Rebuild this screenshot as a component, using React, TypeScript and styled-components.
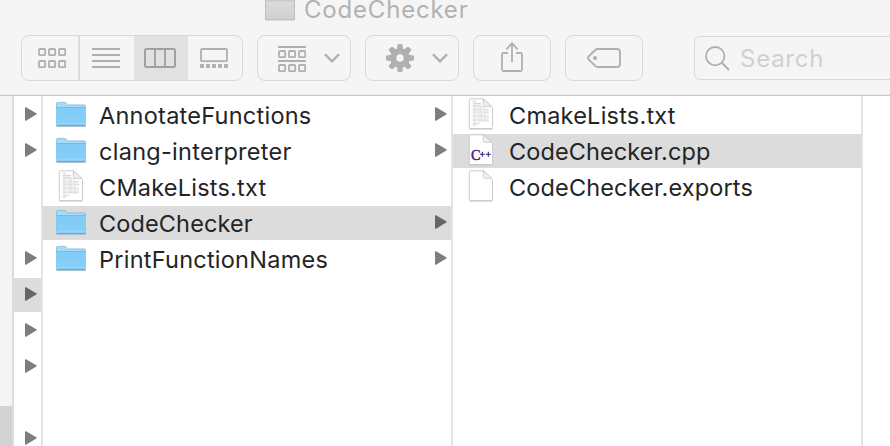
import React from "react";
import styled, { createGlobalStyle } from "styled-components";

const GlobalStyle = createGlobalStyle`
  * { box-sizing: border-box; }
  body { margin: 0; background: #fff; overflow: hidden; }
  svg { display: block; flex: none; }
`;

const Window = styled.div`
  display: flex;
  flex-direction: column;
  width: 890px;
  height: 446px;
  overflow: hidden;
  background: #fff;
  color: #242424;
  font-family: Inter, "Liberation Sans", sans-serif;
`;

const Header = styled.header`
  flex: none;
  height: 96px;
  background: #f5f5f5;
  border-bottom: 1px solid #c9c9c9;
  box-shadow: inset 0 -1px 0 #e9e9e9;
`;

const TitleBar = styled.div`
  display: flex;
  height: 35px;
  padding-left: 265px;
  gap: 9px;
`;

const Title = styled.span`
  height: 20px;
  font-size: 24px;
  line-height: 19px;
  letter-spacing: 0.8px;
  color: #b2b2b2;
  white-space: nowrap;
`;

const Toolbar = styled.div`
  display: flex;
  align-items: center;
  height: 46px;
  padding-left: 21px;
  gap: 14px;
`;

const ToolGroup = styled.div<{ $width: number }>`
  display: flex;
  flex: none;
  width: ${(p) => p.$width}px;
  height: 46px;
  border: 1px solid #d9d9d9;
  border-radius: 8px;
  overflow: hidden;
`;

const Segment = styled.button<{ $width: number; $active?: boolean; $divided?: boolean; $inset?: number }>`
  display: flex;
  flex: none;
  align-items: center;
  justify-content: flex-start;
  width: ${(p) => p.$width}px;
  padding: 0 0 0 ${(p) => p.$inset ?? 0}px;
  border: 0;
  border-right: ${(p) => (p.$divided ? "2px solid #dcdcdc" : "0")};
  background: ${(p) => (p.$active ? "#e2e2e2" : "transparent")};
  color: ${(p) => (p.$active ? "#a0a0a0" : "#b0b0b0")};
`;

const MenuButton = styled.button`
  display: flex;
  align-items: center;
  justify-content: space-between;
  width: 100%;
  padding: 0 10px 0 20px;
  border: 0;
  background: transparent;
  color: #b0b0b0;
`;

const SearchField = styled.label`
  display: flex;
  flex: none;
  align-items: center;
  width: 240px;
  height: 44px;
  margin-left: 37px;
  padding-left: 10px;
  gap: 10px;
  border: 1px solid #d9d9d9;
  border-radius: 6px;
  font-size: 24px;
  line-height: 30px;
  letter-spacing: 0.75px;
  color: #d0d0d0;
`;

const SearchLabel = styled.span`
  padding-top: 1px;
`;

const Browser = styled.main`
  display: flex;
  flex: 1;
  min-height: 0;
`;

const Sidebar = styled.aside`
  display: flex;
  flex: none;
  flex-direction: column;
  justify-content: flex-end;
  width: 14px;
  background: #f5f5f5;
  border-right: 2px solid #dcdcdc;
`;

const SidebarSelection = styled.div`
  height: 40px;
  background: #d2d2d2;
`;

const Column = styled.section<{ $width: number }>`
  display: flex;
  flex: none;
  flex-direction: column;
  gap: 2px;
  width: ${(p) => p.$width}px;
  padding-top: 2px;
  border-right: 2px solid #e4e4e4;
`;

const Row = styled.div<{ $selected?: boolean }>`
  display: flex;
  flex: none;
  align-items: center;
  height: 34px;
  padding: 0 4px 0 11px;
  background: ${(p) => (p.$selected ? "#dcdcdc" : "transparent")};
  color: ${(p) => (p.$selected ? "#666" : "#7d7d7d")};
`;

const IconCell = styled.span`
  display: flex;
  flex: none;
  justify-content: center;
  width: 34px;
  height: 34px;
`;

const FileName = styled.span<{ $tracking: number }>`
  flex: 1;
  margin-left: 11px;
  padding-top: 1px;
  font-size: 23.5px;
  line-height: 33px;
  letter-spacing: ${(p) => p.$tracking}px;
  color: #242424;
  white-space: nowrap;
`;

const squares = (y: number) =>
  [1, 11, 21].map((x) => (
    <rect key={`${x}-${y}`} x={x} y={y} width="6.2" height="6.2" rx="1" fill="none" stroke="currentColor" strokeWidth="1.8" />
  ));

const GridIcon = () => (
  <svg width="28" height="20">{squares(1)}{squares(13)}</svg>
);

const ListIcon = () => (
  <svg width="28" height="20">
    <path d="M0 1h28M0 7h28M0 13h28M0 19h28" stroke="currentColor" strokeWidth="1.8" />
  </svg>
);

const ColumnsIcon = () => (
  <svg width="32" height="20">
    <rect x="1" y="1" width="30" height="18" rx="1.5" fill="none" stroke="currentColor" strokeWidth="2" />
    <path d="M11 1v18M21 1v18" stroke="currentColor" strokeWidth="1.8" />
  </svg>
);

const GalleryIcon = () => (
  <svg width="28" height="20">
    <rect x="1" y="1" width="26" height="12.2" rx="1.3" fill="none" stroke="currentColor" strokeWidth="1.8" />
    {[0, 6, 12, 18, 24].map((x) => (
      <rect key={x} x={x} y="16" width="4" height="4" rx=".7" fill="currentColor" />
    ))}
  </svg>
);

const GroupIcon = () => (
  <svg width="28" height="28">
    <path d="M0 3h28M0 17h28" stroke="currentColor" strokeWidth="1.8" />
    {squares(7)}
    {squares(21)}
  </svg>
);

const ChevronIcon = () => (
  <svg width="16" height="10">
    <path d="M1.6 1.9 8 8.4l6.4-6.5" fill="none" stroke="currentColor" strokeWidth="2.3" strokeLinecap="round" />
  </svg>
);

const GearIcon = () => (
  <svg width="28" height="28" viewBox="-14 -14 28 28">
    {[0, 45, 90, 135, 180, 225, 270, 315].map((angle) => (
      <path key={angle} transform={`rotate(${angle})`} d="M-3.4 -7.5-2.4-13.4q.1-.6.7-.6h3.4q.6 0 .7.6L3.4-7.5z" fill="currentColor" />
    ))}
    <circle r="6.7" fill="none" stroke="currentColor" strokeWidth="6" />
  </svg>
);

const ShareIcon = () => (
  <svg width="22" height="32">
    <path d="M7 11H2.4Q1 11 1 12.4v15.2Q1 29 2.4 29h17.2q1.4 0 1.4-1.4V12.4Q21 11 19.6 11H15M11 1v19M5.4 7.4 11 1.2l5.6 6.2" fill="none" stroke="currentColor" strokeWidth="1.8" />
  </svg>
);

const TagIcon = () => (
  <svg width="34" height="20">
    <path d="M10.5 1H30q3 0 3 3v12q0 3-3 3H10.5q-1.2 0-2-.8L1.6 11.5q-1.2-1.5 0-3L8.5 1.8q.8-.8 2-.8z" fill="none" stroke="currentColor" strokeWidth="1.9" />
    <circle cx="8" cy="10" r="2" fill="currentColor" />
  </svg>
);

const SearchIcon = () => (
  <svg width="25" height="26">
    <circle cx="10.2" cy="11.2" r="9.2" fill="none" stroke="#b0b0b0" strokeWidth="1.8" />
    <path d="m16.8 17.7 7.3 7.3" stroke="#b0b0b0" strokeWidth="2" />
  </svg>
);

const TitleFolderIcon = () => (
  <svg width="30" height="21">
    <defs>
      <linearGradient id="titleFolder" x2="0" y2="1">
        <stop stopColor="#dedede" />
        <stop offset="1" stopColor="#d0d0d0" />
      </linearGradient>
    </defs>
    <path d="M.5-3h29v22.5H.5z" fill="url(#titleFolder)" stroke="#bdbdbd" />
    <path d="M1 .8h28" stroke="#c2c2c2" />
    <path d="M0 20.4h30" stroke="#dadada" />
  </svg>
);

const FolderIcon = () => (
  <svg width="30" height="34">
    <defs>
      <linearGradient id="folderFront" x2="0" y2="1">
        <stop stopColor="#80cbf7" />
        <stop offset="1" stopColor="#8acffa" />
      </linearGradient>
    </defs>
    <path d="M.3 28.6h29.4" stroke="#c2c6c9" strokeWidth="1" />
    <path d="M.4 5.8Q.4 4.4 1.6 4.4h7.2q.9 0 1.6.8l1.1 1.2q.5.5 1.2.5h15.7q1.2 0 1.2 1.2v18.4q0 1.4-1.2 1.4H1.6Q.4 27.9.4 26.5z" fill="#a5dbfa" stroke="#70b5dc" strokeWidth=".7" />
    <path d="M.5 9.6h29v16.9q0 1.2-1.2 1.2H1.7Q.5 27.7.5 26.5z" fill="url(#folderFront)" />
    <path d="M.5 9.5h29" stroke="#65b9e8" strokeWidth=".8" />
    <path d="M.6 25.4h28.8" stroke="#a0daf9" strokeWidth=".7" />
    <path d="M.6 27.5h28.8" stroke="#5da9d3" strokeWidth=".9" />
  </svg>
);

type FileKind = "folder" | "text" | "cpp" | "blank";

const DocumentIcon = ({ kind }: { kind: FileKind }) => (
  <svg width="26" height="34">
    <path d="M1.4 31h23.2" stroke="#c4c4c4" strokeWidth="1" />
    <path d="M2.3.8h13.4l8.8 8.8v19.9q0 1-1 1H2.3q-1 0-1-1V1.8q0-1 1-1z" fill="#fff" stroke="#c6c6c6" strokeWidth=".9" />
    <path d="M15.3 1v5.6q0 1.7 1.7 1.7h6.9z" fill="#f1f1f1" stroke="#c4c4c4" strokeWidth=".8" />
    {kind === "text" && (
      <g fill="none" stroke="#bababa" strokeWidth=".7">
        <path d="M4.8 3.2h3.5M4.8 5.4h8M4.8 7.2h8.5" />
        <path d="M4.8 9h12M4.8 11.2h16M4.8 13h15.5M4.8 14.8h16M4.8 17h14M4.8 18.8h16M4.8 21h15.5M4.8 22.8h16M4.8 25.2h7M4.8 27h4.5" strokeDasharray="3.2 .5 1.8 .4 4 .6" />
      </g>
    )}
    {kind === "cpp" && (
      <g fill="#3d1d86" fontFamily='"Liberation Serif", serif' fontWeight="700">
        <text x="3" y="25.5" fontSize="15.5" fontWeight="400" stroke="#3d1d86" strokeWidth=".5" textLength="9.5" lengthAdjust="spacingAndGlyphs">C</text>
        <path d="M11.8 20.3h5M14.3 17.8v5M17.8 20.3h5M20.3 17.8v5" stroke="#3d1d86" strokeWidth="1.1" />
      </g>
    )}
  </svg>
);

const Arrow = () => (
  <svg width="12" height="16">
    <path d="M0 .8Q0-.2 1 .3l10.3 6q.9.6 0 1.2L1 13.7q-1 .5-1-.5z" fill="currentColor" />
  </svg>
);

interface Entry {
  name: string;
  kind: FileKind;
  tracking: number;
  selected?: boolean;
}

const folderEntries: Entry[] = [
  { name: "AnnotateFunctions", kind: "folder", tracking: 0.25 },
  { name: "clang-interpreter", kind: "folder", tracking: 0.28 },
  { name: "CMakeLists.txt", kind: "text", tracking: 0.22 },
  { name: "CodeChecker", kind: "folder", tracking: 0.12, selected: true },
  { name: "PrintFunctionNames", kind: "folder", tracking: 0.24 },
];

const fileEntries: Entry[] = [
  { name: "CmakeLists.txt", kind: "text", tracking: 0.22 },
  { name: "CodeChecker.cpp", kind: "cpp", tracking: 0.1, selected: true },
  { name: "CodeChecker.exports", kind: "blank", tracking: 0.14 },
];

const parentRows = ["folder", "folder", "file", "file", "folder", "selected", "folder", "folder", "file", "folder"];

const EntryRow = ({ entry }: { entry: Entry }) => (
  <Row $selected={entry.selected}>
    <IconCell>{entry.kind === "folder" ? <FolderIcon /> : <DocumentIcon kind={entry.kind} />}</IconCell>
    <FileName $tracking={entry.tracking}>{entry.name}</FileName>
    {entry.kind === "folder" && <Arrow />}
  </Row>
);

export default function App() {
  return (
    <Window>
      <GlobalStyle />
      <Header>
        <TitleBar>
          <TitleFolderIcon />
          <Title>CodeChecker</Title>
        </TitleBar>
        <Toolbar>
          <ToolGroup $width={222}>
            <Segment $width={58} $inset={16} $divided><GridIcon /></Segment>
            <Segment $width={54} $inset={12}><ListIcon /></Segment>
            <Segment $width={54} $inset={10} $active><ColumnsIcon /></Segment>
            <Segment $width={54} $inset={12}><GalleryIcon /></Segment>
          </ToolGroup>
          <ToolGroup $width={94}>
            <MenuButton><GroupIcon /><ChevronIcon /></MenuButton>
          </ToolGroup>
          <ToolGroup $width={94}>
            <MenuButton><GearIcon /><ChevronIcon /></MenuButton>
          </ToolGroup>
          <ToolGroup $width={78}>
            <Segment $width={76} $inset={27}><ShareIcon /></Segment>
          </ToolGroup>
          <ToolGroup $width={78}>
            <Segment $width={76} $inset={21}><TagIcon /></Segment>
          </ToolGroup>
          <SearchField><SearchIcon /><SearchLabel>Search</SearchLabel></SearchField>
        </Toolbar>
      </Header>
      <Browser>
        <Sidebar><SidebarSelection /></Sidebar>
        <Column $width={29}>
          {parentRows.map((kind, i) => (
            <Row key={i} $selected={kind === "selected"}>{kind !== "file" && <Arrow />}</Row>
          ))}
        </Column>
        <Column $width={410}>
          {folderEntries.map((entry) => <EntryRow key={entry.name} entry={entry} />)}
        </Column>
        <Column $width={410}>
          {fileEntries.map((entry) => <EntryRow key={entry.name} entry={entry} />)}
        </Column>
      </Browser>
    </Window>
  );
}
